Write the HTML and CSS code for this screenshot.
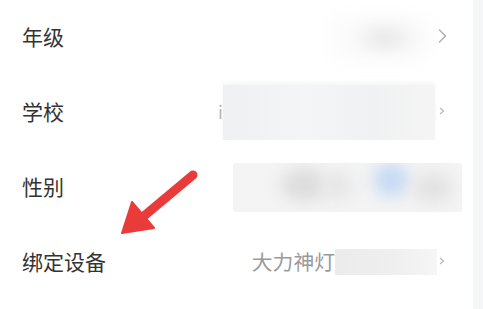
FILE: index.html
```html
<!DOCTYPE html>
<html lang="zh-CN">

<head>
    <meta charset="UTF-8" />
    <meta name="viewport" content="width=device-width, initial-scale=1.0" />
    <title>个人资料</title>
    <link rel="stylesheet" href="styles.css">
</head>

<body>
    <div class="page">
        <ul class="list">
            <li class="row">
                <span class="label">年级</span>
                <div class="value">
                    <div class="mask mask-grade"></div>
                    <svg class="chevron" width="10" height="16" viewBox="0 0 10 16"><polyline points="2,1.5 8.5,8 2,14.5" /></svg>
                </div>
            </li>
            <li class="row">
                <span class="label">学校</span>
                <div class="value">
                    <span class="peek">i</span>
                    <div class="mask mask-school"></div>
                    <svg class="chevron small" width="10" height="16" viewBox="0 0 10 16"><polyline points="3,5 6.5,8 3,11" /></svg>
                </div>
            </li>
            <li class="row">
                <span class="label">性别</span>
                <div class="value">
                    <div class="mask mask-gender">
                        <span class="blob b1"></span>
                        <span class="blob b2"></span>
                        <span class="blob b3"></span>
                        <span class="blob b4"></span>
                    </div>
                </div>
            </li>
            <li class="row">
                <span class="label">绑定设备</span>
                <div class="value">
                    <span class="text">大力神灯</span>
                    <div class="mask mask-device"></div>
                    <svg class="chevron small" width="10" height="16" viewBox="0 0 10 16"><polyline points="3,5 6.5,8 3,11" /></svg>
                </div>
            </li>
        </ul>
        <div class="side"></div>

        <svg class="arrow" width="100" height="90" viewBox="0 0 100 90">
            <line x1="83" y1="15" x2="34" y2="56" />
            <polygon points="12,73 22,42 44,68" />
        </svg>
    </div>
</body>

</html>
```

FILE: styles.css
```css
body {
    margin: 0;
    background-color: #fff;
    font-family: "Noto Sans CJK SC", "Noto Sans", sans-serif;
    overflow: hidden;
}

.page {
    display: flex;
    height: 309px;
    position: relative;
}

.list {
    list-style: none;
    margin: 0;
    padding: 0;
    width: 473px;
}

.side {
    flex: 1;
    background-color: #f5f6f8;
}

.row {
    box-sizing: border-box;
    height: 75px;
    display: flex;
    align-items: center;
    justify-content: space-between;
    padding: 0 26px 4px 22px;
}

.label {
    font-size: 21px;
    color: #333;
}

.value {
    display: flex;
    align-items: center;
}

.text {
    font-size: 20.8px;
    color: #9a9a9a;
}

.chevron {
    fill: none;
    stroke: #a8a8a8;
    stroke-width: 1.4;
    margin-left: 2px;
}

.chevron.small {
    stroke: #b8b8b8;
    stroke-width: 1.2;
    margin-left: 0;
}

.peek {
    font-size: 18px;
    color: #aaa;
    width: 5px;
    overflow: hidden;
}

.mask {
    position: relative;
}

.mask-grade {
    width: 106px;
    height: 52px;
    margin: 4px 2px 0 0;
    border-radius: 20px;
    background: radial-gradient(ellipse 40px 20px at 58px 26px, #e4e4e4, #f5f5f5 65%, #fcfcfc);
    filter: blur(7px);
}

.mask-school {
    width: 212px;
    height: 55px;
    margin: 4px 2px 0 0;
    background: linear-gradient(90deg, #eff0f2, #f4f5f6 40%, #f0f1f2 70%, #f5f5f5);
    box-shadow: 0 -3px 5px #f6f6f6;
}

.mask-gender {
    width: 229px;
    height: 49px;
    margin: 4px -15px 0 0;
    background: #f4f4f4;
    border-radius: 3px;
    overflow: hidden;
}

.blob {
    position: absolute;
    border-radius: 50%;
    filter: blur(8px);
}

.b1 {
    left: 48px;
    top: 6px;
    width: 46px;
    height: 32px;
    background: #dcdcdc;
}

.b2 {
    left: 90px;
    top: 8px;
    width: 30px;
    height: 30px;
    background: #e6e6e6;
}

.b3 {
    left: 140px;
    top: 0;
    width: 36px;
    height: 34px;
    background: #c6daf4;
}

.b4 {
    left: 180px;
    top: 10px;
    width: 40px;
    height: 30px;
    background: #e2e2e2;
}

.mask-device {
    width: 102px;
    height: 26px;
    margin-top: 2px;
    background: linear-gradient(90deg, #ebebeb, #efefef 60%, #f6f6f6);
}

.arrow {
    position: absolute;
    left: 110px;
    top: 160px;
}

.arrow line {
    stroke: #ea3b3b;
    stroke-width: 9;
    stroke-linecap: round;
}

.arrow polygon {
    fill: #ea3b3b;
    stroke: #ea3b3b;
    stroke-width: 2;
    stroke-linejoin: round;
}
```
